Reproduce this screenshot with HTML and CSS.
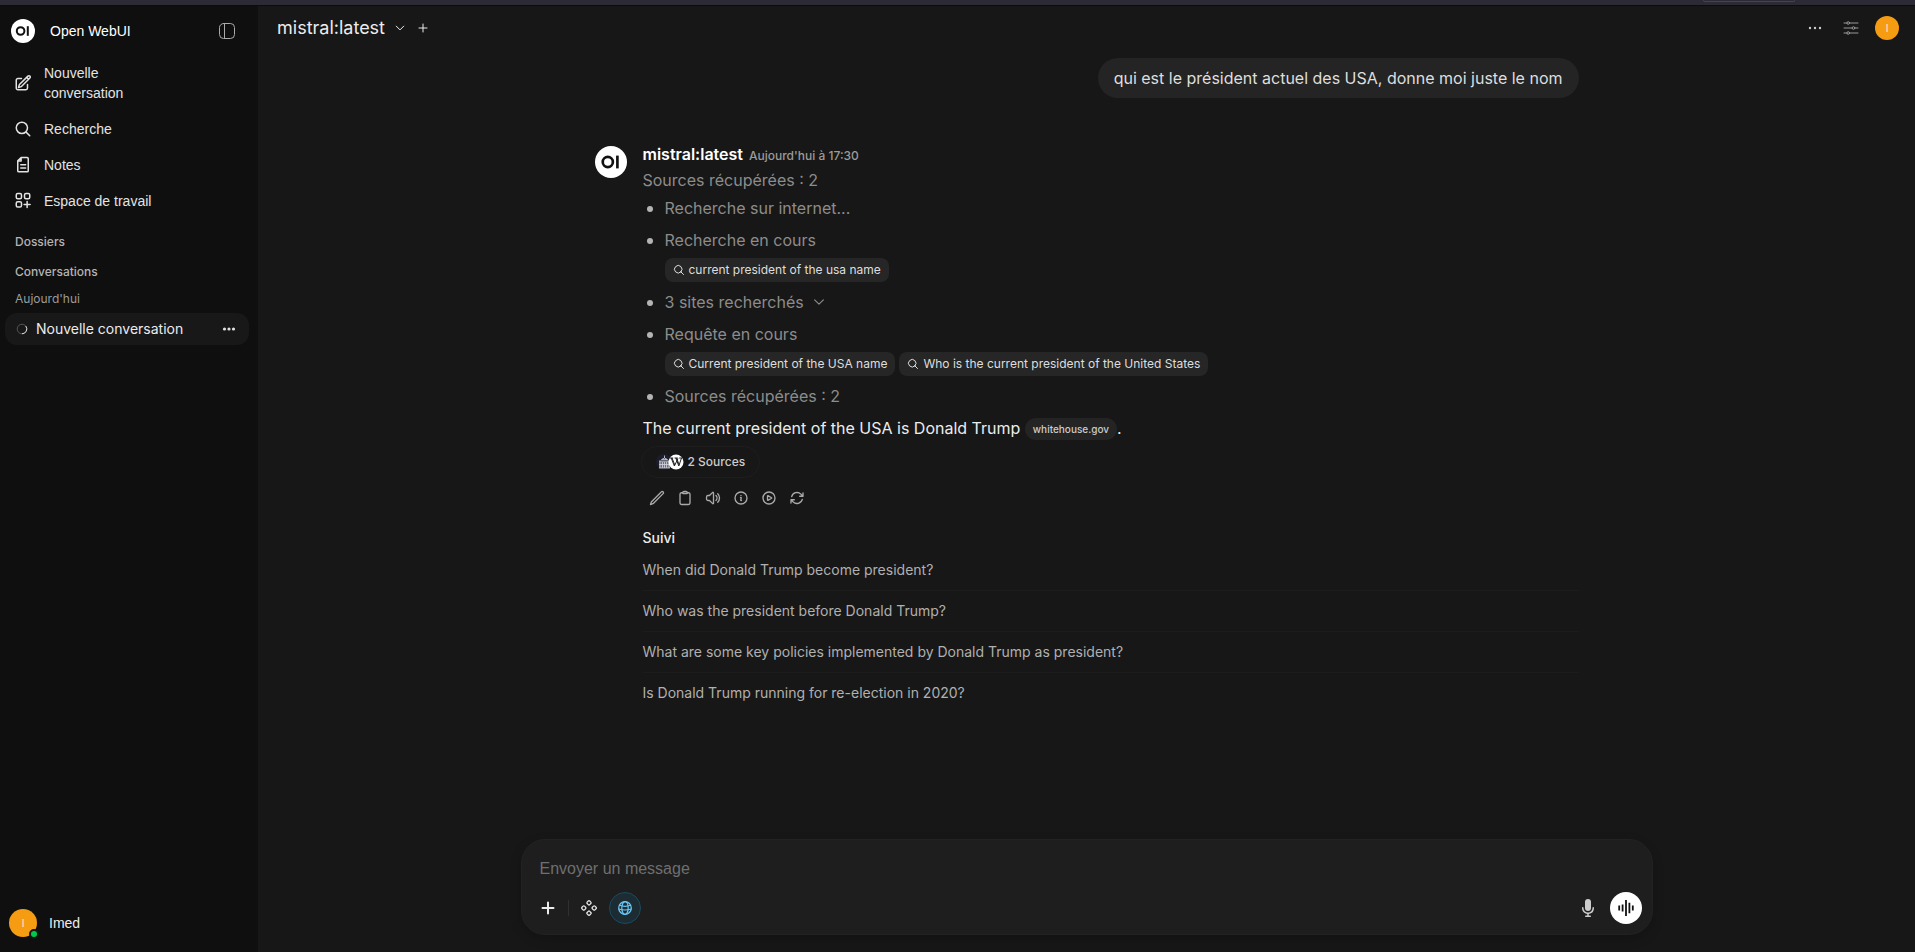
FILE: index.html
```html
<!DOCTYPE html>
<html lang="fr">
<head>
<meta charset="utf-8">
<meta name="viewport" content="width=device-width, initial-scale=1">
<title>Open WebUI</title>
<link rel="stylesheet" href="styles.css">
</head>
<body>
<div class="topstrip"><span class="strip-tab"></span></div>
<div class="app">
  <aside class="sidebar">
    <header class="brand">
      <svg class="logo" viewBox="0 0 24 24" width="24" height="24" aria-hidden="true"><circle cx="12" cy="12" r="12" fill="#fff"/><circle cx="9.6" cy="12" r="3.8" fill="none" stroke="#111" stroke-width="2"/><rect x="15.8" y="7.2" width="2" height="9.600" fill="#111"/></svg>
      <span class="brand-name">Open WebUI</span>
      <button class="icon-btn toggle" aria-label="Barre latérale">
        <svg class="line" viewBox="0 0 18 18" width="18" height="18"><rect x="1.500" y="1.500" width="15" height="15" rx="4"/><path d="M6.500 1.500v15"/></svg>
      </button>
    </header>
    <nav class="menu">
      <a class="menu-item" href="#">
        <svg class="line" viewBox="0 0 24 24" width="18" height="18"><path d="m16.862 4.487 1.687-1.688a1.875 1.875 0 1 1 2.652 2.652L10.582 16.07a4.5 4.5 0 0 1-1.897 1.13L6 18l.8-2.685a4.5 4.5 0 0 1 1.13-1.897l8.932-8.931Zm0 0L19.5 7.125M18 14v4.75A2.25 2.25 0 0 1 15.75 21H5.25A2.25 2.25 0 0 1 3 18.75V8.25A2.25 2.25 0 0 1 5.25 6H10"/></svg>
        <span>Nouvelle<br>conversation</span>
      </a>
      <a class="menu-item" href="#">
        <svg class="line" viewBox="0 0 24 24" width="18" height="18"><path d="m21 21-5.197-5.197m0 0A7.5 7.5 0 1 0 5.196 5.196a7.5 7.5 0 0 0 10.607 10.607Z"/></svg>
        <span>Recherche</span>
      </a>
      <a class="menu-item" href="#">
        <svg class="line" viewBox="0 0 24 24" width="18" height="18"><path d="M9.500 2h8A1.500 1.500 0 0 1 19 3.500v16a1.500 1.500 0 0 1-1.500 1.500h-11A1.500 1.500 0 0 1 5 19.500V6.500L9.500 2V6.500H5M9 11.500h6.500M9 16h6.500"/></svg>
        <span>Notes</span>
      </a>
      <a class="menu-item" href="#">
        <svg class="line" viewBox="0 0 24 24" width="18" height="18"><rect x="3" y="2" width="7" height="7" rx="2"/><rect x="14" y="2" width="7" height="7" rx="2"/><rect x="3" y="13" width="7" height="7" rx="2"/><path d="M17.500 12.500v8M13.500 16.500h8"/></svg>
        <span>Espace de travail</span>
      </a>
    </nav>
    <h2 class="section">Dossiers</h2>
    <h2 class="section chats">Conversations</h2>
    <h3 class="day">Aujourd'hui</h3>
    <div class="chat-row">
      <svg class="spinner" viewBox="0 0 12 12" width="12" height="12" aria-hidden="true"><circle cx="6" cy="6" r="4.800" stroke="#555"/><path d="M9.800 3.100a4.800 4.800 0 0 1-3.800 7.700" stroke="#ddd"/></svg>
      <a href="#" class="chat-link">Nouvelle conversation</a>
      <button class="icon-btn" aria-label="Plus d'options"><svg viewBox="0 0 16 16" width="16" height="16" fill="#e0e0e0"><circle cx="3.500" cy="8" r="1.600"/><circle cx="8" cy="8" r="1.600"/><circle cx="12.500" cy="8" r="1.600"/></svg></button>
    </div>
    <button class="account">
      <span class="avatar large">I<span class="online"></span></span>
      <span>Imed</span>
    </button>
  </aside>

  <main class="main">
    <header class="navbar">
      <button class="model">mistral:latest
        <svg class="line bold" viewBox="0 0 24 24" width="12" height="12"><path d="m19.500 8.250-7.500 7.500-7.500-7.500"/></svg>
      </button>
      <button class="icon-btn add" aria-label="Ajouter un modèle"><svg class="line bold" viewBox="0 0 24 24" width="12" height="12"><path d="M12 4v16M4 12h16"/></svg></button>
      <div class="nav-actions">
        <button class="icon-btn" aria-label="Menu"><svg viewBox="0 0 16 16" width="16" height="16" fill="#ccc"><circle cx="3" cy="8" r="1.200"/><circle cx="8" cy="8" r="1.200"/><circle cx="13" cy="8" r="1.200"/></svg></button>
        <button class="icon-btn" aria-label="Réglages"><svg class="line sliders" viewBox="0 0 16 16" width="16" height="16"><path d="M1 3h3M6.500 3h8.500M1 8h8M12 8h3M1 13h3M6.500 13h8.500"/><circle cx="5.200" cy="3" r="1.300"/><circle cx="10.500" cy="8" r="1.300"/><circle cx="5.200" cy="13" r="1.300"/></svg></button>
        <button class="icon-btn" aria-label="Compte"><span class="avatar">I</span></button>
      </div>
    </header>

    <section class="thread">
      <p class="bubble">qui est le président actuel des USA, donne moi juste le nom</p>
      <article class="reply">
        <svg class="reply-logo" viewBox="0 0 24 24" width="32" height="32" aria-hidden="true"><circle cx="12" cy="12" r="12" fill="#fff"/><circle cx="9.600" cy="12" r="3.800" fill="none" stroke="#111" stroke-width="2"/><rect x="15.800" y="7.200" width="2" height="9.600" fill="#111"/></svg>
        <div class="reply-body">
          <header class="reply-head"><strong>mistral:latest</strong><time>Aujourd'hui à 17:30</time></header>
          <p class="status">Sources récupérées : 2</p>
          <ul class="steps">
            <li>Recherche sur internet...</li>
            <li>Recherche en cours
              <div class="queries">
                <span class="query"><svg class="line" viewBox="0 0 24 24" width="12" height="12"><path d="m21 21-5.197-5.197m0 0A7.500 7.500 0 1 0 5.196 5.196a7.500 7.500 0 0 0 10.607 10.607Z"/></svg>current president of the usa name</span>
              </div>
            </li>
            <li><button class="sites">3 sites recherchés <svg class="line bold" viewBox="0 0 24 24" width="14" height="14"><path d="m19.500 8.250-7.500 7.500-7.500-7.500"/></svg></button></li>
            <li>Requête en cours
              <div class="queries">
                <span class="query"><svg class="line" viewBox="0 0 24 24" width="12" height="12"><path d="m21 21-5.197-5.197m0 0A7.500 7.500 0 1 0 5.196 5.196a7.500 7.500 0 0 0 10.607 10.607Z"/></svg>Current president of the USA name</span>
                <span class="query"><svg class="line" viewBox="0 0 24 24" width="12" height="12"><path d="m21 21-5.197-5.197m0 0A7.500 7.500 0 1 0 5.196 5.196a7.500 7.500 0 0 0 10.607 10.607Z"/></svg>Who is the current president of the United States</span>
              </div>
            </li>
            <li>Sources récupérées : 2</li>
          </ul>
          <p class="answer">The current president of the USA is Donald Trump <a class="cite" href="#">whitehouse.gov</a>.</p>
          <button class="sources">
            <span class="favicons">
              <svg viewBox="0 0 16 16" width="16" height="16"><circle cx="8" cy="8" r="8" fill="#1c1d2c"/><path d="M3 7h11v7H3z" fill="#6d6f80"/><path d="M3 7h11M3 14h11M4 7v7M6.500 8v6M8.500 8v6M10.500 8v6M13 7v7M5.500 5.500h6L8.500 4zM8.500 1.500V4M3 10.500h11" fill="none" stroke="#d4d5dd" stroke-width=".8"/></svg>
              <svg viewBox="0 0 16 16" width="16" height="16"><circle cx="8" cy="8" r="7.500" fill="#fff"/><path d="M1.800 4h3.400M6.600 4h3.200M11.200 4h3M3.200 4l3.200 8L10 4.500M7.800 4l3 8 2.700-8M4 4l2.800 7M8.600 4l2.600 7" fill="none" stroke="#222" stroke-width="1"/></svg>
            </span>
            2 Sources
          </button>
          <div class="actions">
            <button class="icon-btn" aria-label="Modifier"><svg class="line bold" viewBox="0 0 24 24" width="16" height="16"><path d="m16.862 4.487 1.687-1.688a1.875 1.875 0 1 1 2.652 2.652L6.832 19.820a4.500 4.500 0 0 1-1.897 1.130l-2.685.800.800-2.685a4.500 4.500 0 0 1 1.130-1.897L16.863 4.487Zm0 0"/></svg></button>
            <button class="icon-btn" aria-label="Copier"><svg class="line bold" viewBox="0 0 24 24" width="16" height="16"><path d="M15.666 3.888A2.250 2.250 0 0 0 13.500 2.250h-3c-1.030 0-1.900.693-2.166 1.638m7.332 0c.055.194.084.400.084.612a.750.750 0 0 1-.750.750H9a.750.750 0 0 1-.750-.750c0-.212.030-.418.084-.612m7.332 0c.646.049 1.288.110 1.927.184 1.100.128 1.907 1.077 1.907 2.185V19.500a2.250 2.250 0 0 1-2.250 2.250H6.750A2.250 2.250 0 0 1 4.500 19.500V6.257c0-1.108.806-2.057 1.907-2.185a48.208 48.208 0 0 1 1.927-.184"/></svg></button>
            <button class="icon-btn" aria-label="Lire à haute voix"><svg class="line bold" viewBox="0 0 24 24" width="16" height="16"><path d="M19.114 5.636a9 9 0 0 1 0 12.728M16.463 8.288a5.250 5.250 0 0 1 0 7.424M6.750 8.250l4.720-4.720a.750.750 0 0 1 1.280.530v15.880a.750.750 0 0 1-1.280.530l-4.720-4.720H4.510c-.880 0-1.704-.507-1.938-1.354A9.009 9.009 0 0 1 2.250 12c0-.830.112-1.633.322-2.396C2.806 8.756 3.630 8.250 4.510 8.250H6.750Z"/></svg></button>
            <button class="icon-btn" aria-label="Informations"><svg class="line bold" viewBox="0 0 24 24" width="16" height="16"><path d="m11.250 11.250.041-.020a.750.750 0 0 1 1.063.852l-.708 2.836a.750.750 0 0 0 1.063.853l.041-.021M21 12a9 9 0 1 1-18 0 9 9 0 0 1 18 0Zm-9-3.750h.008v.008H12V8.250Z"/></svg></button>
            <button class="icon-btn" aria-label="Continuer"><svg class="line bold" viewBox="0 0 24 24" width="16" height="16"><path d="M21 12a9 9 0 1 1-18 0 9 9 0 0 1 18 0Z"/><path d="M15.910 11.672a.375.375 0 0 1 0 .656l-5.603 3.113a.375.375 0 0 1-.557-.328V8.887c0-.286.307-.466.557-.327l5.603 3.112Z"/></svg></button>
            <button class="icon-btn" aria-label="Régénérer"><svg class="line bold" viewBox="0 0 24 24" width="16" height="16"><path d="M16.023 9.348h4.992V4.356M2.985 19.644v-4.992h4.992m-4.992 0 3.181 3.183a8.250 8.250 0 0 0 13.803-3.700M4.031 9.865a8.250 8.250 0 0 1 13.803-3.700l3.181 3.182"/></svg></button>
          </div>
          <h4 class="follow-title">Suivi</h4>
          <div class="follow">
            <button>When did Donald Trump become president?</button>
            <button>Who was the president before Donald Trump?</button>
            <button>What are some key policies implemented by Donald Trump as president?</button>
            <button>Is Donald Trump running for re-election in 2020?</button>
          </div>
        </div>
      </article>
    </section>

    <form class="composer">
      <textarea rows="1" aria-label="Message" placeholder="Envoyer un message"></textarea>
      <div class="tools">
        <button type="button" class="icon-btn plus" aria-label="Ajouter"><svg class="line thick" viewBox="0 0 16 16" width="16" height="16"><path d="M8 2.500v11M2.500 8h11"/></svg></button>
        <span class="divider"></span>
        <button type="button" class="icon-btn" aria-label="Intégrations"><svg class="line mid" viewBox="0 0 16 16" width="16" height="16"><rect x="6.200" y="1" width="3.600" height="3.600" rx="1" transform="rotate(45 8 2.800)"/><rect x="6.200" y="11.400" width="3.600" height="3.600" rx="1" transform="rotate(45 8 13.200)"/><rect x="1" y="6.200" width="3.600" height="3.600" rx="1" transform="rotate(45 2.800 8)"/><rect x="11.400" y="6.200" width="3.600" height="3.600" rx="1" transform="rotate(45 13.200 8)"/></svg></button>
        <button type="button" class="icon-btn web" aria-label="Recherche Web"><svg class="line mid" viewBox="0 0 16 16" width="16" height="16"><circle cx="8" cy="8" r="6.300"/><ellipse cx="8" cy="8" rx="3.200" ry="6.300"/><path d="M2.500 5.300q5.500 2 11 0M1.700 9q6.300 2 12.600 0"/></svg></button>
        <span class="space"></span>
        <button type="button" class="icon-btn" aria-label="Dicter"><svg viewBox="0 0 20 20" width="20" height="20" fill="#ccc"><path d="M7 4a3 3 0 0 1 6 0v6a3 3 0 1 1-6 0V4Z"/><path d="M5.500 9.643a.750.750 0 0 0-1.500 0V10c0 3.060 2.290 5.585 5.250 5.954V17.500h-1.500a.750.750 0 0 0 0 1.500h4.500a.750.750 0 0 0 0-1.500h-1.500v-1.546A6.001 6.001 0 0 0 16 10v-.357a.750.750 0 0 0-1.500 0V10a4.500 4.500 0 0 1-9 0v-.357Z"/></svg></button>
        <button type="button" class="icon-btn voice" aria-label="Mode vocal"><svg viewBox="0 0 20 20" width="20" height="20" fill="none" stroke="#111" stroke-width="1.800"><path d="M3.200 7.500v5M6.600 6.500v7M10 2v16M13.400 4.800v10.400M16.800 7.500v5"/></svg></button>
      </div>
    </form>
  </main>
</div>
</body>
</html>
```
FILE: styles.css
```css
* { box-sizing: border-box; }
body {
  margin: 0;
  height: 100vh;
  display: flex;
  flex-direction: column;
  background: #171717;
  color: #ececec;
  font: 16px/24px Inter, "Liberation Sans", sans-serif;
}
h2, h3, h4, p, ul { margin: 0; padding: 0; font-weight: 400; }
button { border: 0; padding: 0; background: none; color: inherit; font: inherit; cursor: pointer; }
a { color: inherit; text-decoration: none; }
svg { display: block; flex: none; }
.line { fill: none; stroke: currentColor; stroke-width: 2; stroke-linecap: round; stroke-linejoin: round; }
.icon-btn { display: flex; align-items: center; justify-content: center; }

.topstrip {
  flex: none;
  height: 6px;
  display: flex;
  justify-content: flex-end;
  padding-right: 120px;
  background: #2b2a35;
  border-bottom: 1px solid #0c0c0e;
}
.strip-tab { width: 92px; height: 2px; border: 1px solid #44434f; border-top: 0; border-radius: 0 0 4px 4px; }
.app { flex: 1; min-height: 0; display: flex; }

.sidebar {
  flex: none;
  width: 258px;
  display: flex;
  flex-direction: column;
  background: #0f0f0f;
}
.brand {
  display: flex;
  align-items: center;
  gap: 15px;
  height: 49px;
  padding: 1px 22px 0 11px;
  font: 14px/20px "Liberation Sans", Arial, sans-serif;
  color: #fff;
}
.brand-name { flex: 1; }
.toggle { color: #aaa; }
.toggle .line { stroke-width: 1; }
.menu { font: 14px/20px "Liberation Sans", Arial, sans-serif; }
.menu-item { display: flex; align-items: center; gap: 12px; padding: 8px 14px; color: #e3e3e3; }
.section { padding: 14px 15px 0; font-size: 12px; line-height: 18px; font-weight: 500; color: #b4b4b4; }
.section.chats { padding-top: 12px; }
.day { padding: 9px 15px 5px; font-size: 12px; line-height: 18px; color: #9b9b9b; }
.chat-row {
  display: flex;
  align-items: center;
  gap: 8px;
  height: 32px;
  margin: 0 9px 0 5px;
  padding: 0 12px 0 11px;
  border-radius: 12px;
  background: #181818;
}
.spinner { fill: none; stroke-width: 1; }
.chat-link { flex: 1; font-size: 14px; line-height: 20px; }
.account {
  display: flex;
  align-items: center;
  gap: 12px;
  margin-top: auto;
  padding: 8px 9px 15px;
  font: 14px/20px "Liberation Sans", Arial, sans-serif;
}
.avatar {
  position: relative;
  display: flex;
  align-items: center;
  justify-content: center;
  width: 24px;
  height: 24px;
  border-radius: 50%;
  background: #f59c12;
  color: #fbe3bb;
  font: 500 10px/12px Inter, sans-serif;
}
.avatar.large { width: 28px; height: 28px; }
.online {
  position: absolute;
  right: -2px;
  bottom: -2px;
  width: 10px;
  height: 10px;
  border: 2px solid #0f1a12;
  border-radius: 50%;
  background: #00c950;
}

.main { flex: 1; min-width: 0; display: flex; flex-direction: column; }
.navbar { display: flex; align-items: center; height: 44px; padding: 0 16px 0 19px; }
.model { display: flex; align-items: center; gap: 9px; font-size: 18px; line-height: 28px; }
.add { margin-left: 11px; }
.nav-actions { display: flex; align-items: center; gap: 16px; margin-left: auto; }
.nav-actions .icon-btn:first-child { margin-right: 4px; }
.sliders { stroke-width: 1; color: #999; }

.thread {
  flex: 1;
  min-height: 0;
  width: 100%;
  max-width: 1024px;
  margin: 0 auto;
  padding: 8px 20px 0;
}
.bubble {
  width: fit-content;
  margin-left: auto;
  padding: 8px 16px;
  border-radius: 20px;
  background: #242424;
  color: #dedede;
}
.reply { display: flex; gap: 16px; margin-top: 44px; }
.reply-logo { margin-top: 4px; }
.reply-body { flex: 1; min-width: 0; }
.reply-head { display: flex; align-items: baseline; gap: 6px; line-height: 24px; }
.reply-head strong { font-weight: 600; color: #fff; }
.reply-head time { font-size: 12px; font-weight: 500; color: #9b9b9b; }
.status { color: #8c8c8c; }
.steps { display: grid; gap: 8px; margin-top: 4px; padding-left: 22px; color: #8c8c8c; list-style: none; }
.steps li::before {
  content: "";
  float: left;
  width: 6px;
  height: 6px;
  margin: 10px 0 0 -18px;
  border-radius: 50%;
  background: #b4b4b4;
}
.queries { display: flex; flex-wrap: wrap; gap: 4px; padding: 6px 0 0; }
.query {
  display: flex;
  align-items: center;
  gap: 4px;
  padding: 3px 8px;
  border-radius: 8px;
  background: #262626;
  color: #dedede;
  font-size: 12px;
  line-height: 18px;
}
.sites { display: flex; align-items: center; gap: 8px; }
.answer { margin-top: 8px; }
.cite {
  display: inline-block;
  padding: 2px 8px;
  border-radius: 12px;
  background: #242424;
  color: #ccc;
  font-size: 10px;
  line-height: 18px;
  font-weight: 500;
  vertical-align: 1px;
}
.sources {
  display: flex;
  align-items: center;
  gap: 4px;
  height: 32px;
  margin: 6px 0 0 -2px;
  padding: 0 14px;
  border: 1px solid #1d1d1d;
  border-radius: 16px;
  color: #ccc;
  font-size: 12px;
  font-weight: 500;
}
.favicons { display: flex; }
.favicons svg + svg { margin-left: -4px; }
.actions { display: flex; gap: 12px; margin-top: 12px; padding-left: 6px; color: #aaa; }
.follow-title { margin-top: 22px; font-size: 14px; line-height: 20px; font-weight: 500; }
.follow { display: grid; margin-top: 2px; }
.follow button {
  padding: 10px 0;
  text-align: left;
  color: #b0b0b0;
  font-size: 14px;
  line-height: 20px;
}
.follow button + button { border-top: 1px solid #1c1c1c; }

.composer {
  width: calc(100% - 20px);
  max-width: 1132px;
  margin: 0 auto 17px;
  padding: 17px 10px 10px;
  border: 1px solid #222;
  border-radius: 24px;
  background: #1e1e1e;
  box-shadow: 0 4px 12px #0003;
}
.composer textarea {
  display: block;
  width: 100%;
  height: 24px;
  margin-bottom: 11px;
  padding: 0 8px;
  border: 0;
  outline: 0;
  resize: none;
  overflow: hidden;
  background: none;
  color: #ececec;
  font: 16px/24px "Liberation Sans", Arial, sans-serif;
}
.composer textarea::placeholder { color: #6f6f6f; }
.tools { display: flex; align-items: center; gap: 12px; height: 32px; padding-left: 8px; }
.tools .line.mid { stroke-width: 1.2; }
.divider { width: 1px; height: 16px; background: #303030; }
.web { width: 32px; height: 32px; border: 1px solid #154c63; border-radius: 50%; background: #1d2b32; color: #69c9f7; }
.space { flex: 1; }
.voice { width: 32px; height: 32px; border-radius: 50%; background: #fff; }
```
